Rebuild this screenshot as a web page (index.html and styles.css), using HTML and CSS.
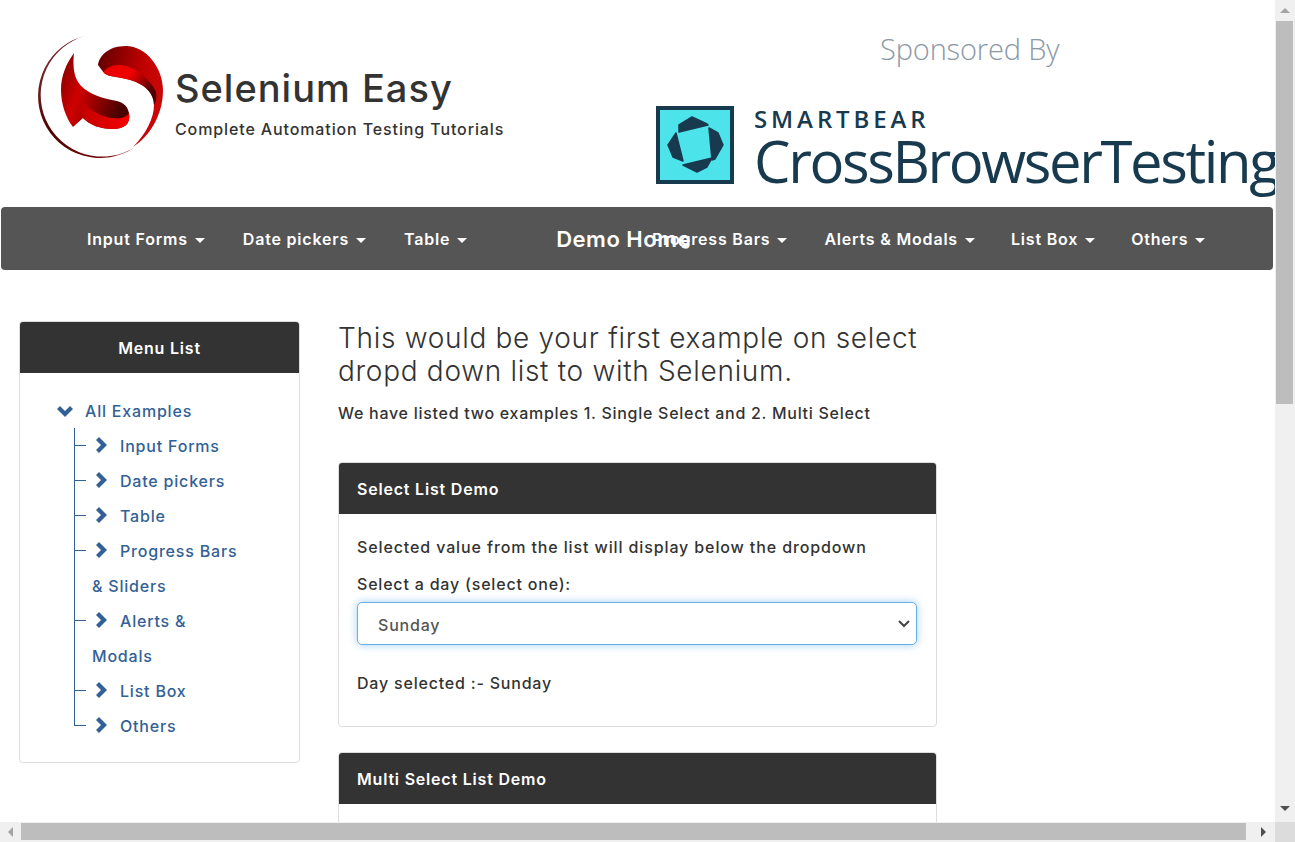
FILE: index.html
```html
<!DOCTYPE html>
<html lang="en">
<head>
  <meta charset="UTF-8">
  <title>Selenium Easy - Dropdown List Demo</title>
  <link rel="stylesheet" href="styles.css">
</head>
<body>

<div class="window">
  <div class="page">

    <header class="top">
      <div class="brand">
        <svg class="logo" viewBox="36 32 130 130" width="130" height="130">
          <defs>
            <linearGradient id="ringGrad" x1="0" y1="0" x2="1" y2="1">
              <stop offset="0" stop-color="#8a3a3a"/>
              <stop offset="0.45" stop-color="#4d0000"/>
              <stop offset="1" stop-color="#8a0c0c"/>
            </linearGradient>
            <linearGradient id="upperGrad" x1="0" y1="0" x2="1" y2="0.3">
              <stop offset="0" stop-color="#5e0000"/>
              <stop offset="0.7" stop-color="#c20000"/>
              <stop offset="1" stop-color="#c80808"/>
            </linearGradient>
            <linearGradient id="upperBand" x1="0" y1="0" x2="1" y2="0.5">
              <stop offset="0" stop-color="#e80000"/>
              <stop offset="0.5" stop-color="#f00000"/>
              <stop offset="1" stop-color="#4a0000"/>
            </linearGradient>
            <linearGradient id="lowerGrad" x1="0" y1="0" x2="1" y2="0.4">
              <stop offset="0" stop-color="#7a0000"/>
              <stop offset="0.4" stop-color="#d00000"/>
              <stop offset="1" stop-color="#4a0000"/>
            </linearGradient>
            <linearGradient id="lowerBand" x1="0" y1="0" x2="1" y2="0">
              <stop offset="0" stop-color="#c00000"/>
              <stop offset="1" stop-color="#f80000"/>
            </linearGradient>
          </defs>
          <path fill="url(#ringGrad)" d="M86 35.6 A62 62 0 1 0 135 147.2 A61.6 61.6 0 1 1 86 35.6 Z"/>
          <path fill="url(#upperGrad)" d="M98 65 C99 57 107 46 126 46 C146 46 163 68 163 90 C163 115 150 136 133 147 C146 134 154 118 154 105 C154 93 145 86 136 82 C128 79 122 78 116 77 C110 76 106 75 104 73 Z"/>
          <path fill="url(#upperBand)" d="M104 71 C109 66 114 65 119 65 C132 65 150 78 156 92 C157 98 156 102 154 105 C154 93 145 86 136 82 C128 79 122 78 116 77 C110 76 106 75 104 73 Z"/>
          <path fill="url(#lowerGrad)" d="M74 53 C66 64 61 76 61 90 C61 104 66 118 73 127 L83 118 C90 125 100 129 113 129 C124 129 131 124 129 113 C127 104 122 102 112 100 C100 98 84 92 78 82 C73 74 73 62 74 53 Z"/>
          <path fill="url(#lowerBand)" d="M83 118 C90 125 100 129 113 129 C124 129 131 124 129 113 C127 117 122 119 112 118 C100 117 88 108 80 100 C79 108 80 114 83 118 Z"/>
        </svg>
        <div class="brand-text">
          <div class="brand-name">Selenium Easy</div>
          <div class="brand-sub">Complete Automation Testing Tutorials</div>
        </div>
      </div>
      <div class="sponsor">
        <div class="sponsor-title">Sponsored By</div>
        <div class="sponsor-logo">
          <svg class="cbt-mark" viewBox="0 0 78 78" width="78" height="78">
            <rect x="2" y="2" width="74" height="74" fill="#4de3ea" stroke="#173a4f" stroke-width="4"/>
            <g fill="#173a4f" stroke="#173a4f" stroke-width="1.5" stroke-linejoin="round">
              <path d="M23 26 L23 19 L36 11 L51 18 L52 19 Z"/>
              <path d="M53 22 L62 27 L67 39 L59 53 L56 54 Z"/>
              <path d="M56 52 L51 61 L41 66 L27 59 Z"/>
              <path d="M20 27 L12 39 L17 51 L27 55 Z"/>
            </g>
          </svg>
          <div class="cbt-text">
            <div class="cbt-small">SMARTBEAR</div>
            <div class="cbt-big">CrossBrowserTesting</div>
          </div>
        </div>
      </div>
    </header>

    <nav class="navbar">
      <a class="nav-item wide">Input Forms<span class="caret"></span></a>
      <a class="nav-item wide">Date pickers<span class="caret"></span></a>
      <a class="nav-item nav-table">Table<span class="caret"></span></a>
      <a class="nav-home">Demo Home</a>
      <a class="nav-item">Progress Bars<span class="caret"></span></a>
      <a class="nav-item tight">Alerts &amp; Modals<span class="caret"></span></a>
      <a class="nav-item tight">List Box<span class="caret"></span></a>
      <a class="nav-item">Others<span class="caret"></span></a>
    </nav>

    <div class="content">
      <aside class="panel side">
        <div class="panel-head center">Menu List</div>
        <div class="side-body">
          <div class="tree-root">
            <svg class="chev-down" viewBox="0 0 16 11" width="16" height="11"><path d="M0 3 L3 0 L8 5 L13 0 L16 3 L8 11 Z"/></svg>
            All Examples
          </div>
          <ul class="tree">
            <li><svg class="chev" viewBox="0 0 11 16" width="11" height="16"><path d="M3 0 L11 8 L3 16 L0 13 L5 8 L0 3 Z"/></svg>Input Forms</li>
            <li><svg class="chev" viewBox="0 0 11 16" width="11" height="16"><path d="M3 0 L11 8 L3 16 L0 13 L5 8 L0 3 Z"/></svg>Date pickers</li>
            <li><svg class="chev" viewBox="0 0 11 16" width="11" height="16"><path d="M3 0 L11 8 L3 16 L0 13 L5 8 L0 3 Z"/></svg>Table</li>
            <li><svg class="chev" viewBox="0 0 11 16" width="11" height="16"><path d="M3 0 L11 8 L3 16 L0 13 L5 8 L0 3 Z"/></svg>Progress Bars<br>&amp; Sliders</li>
            <li><svg class="chev" viewBox="0 0 11 16" width="11" height="16"><path d="M3 0 L11 8 L3 16 L0 13 L5 8 L0 3 Z"/></svg>Alerts &amp;<br>Modals</li>
            <li><svg class="chev" viewBox="0 0 11 16" width="11" height="16"><path d="M3 0 L11 8 L3 16 L0 13 L5 8 L0 3 Z"/></svg>List Box</li>
            <li><svg class="chev" viewBox="0 0 11 16" width="11" height="16"><path d="M3 0 L11 8 L3 16 L0 13 L5 8 L0 3 Z"/></svg>Others</li>
          </ul>
        </div>
      </aside>

      <main class="main">
        <h3 class="intro">This would be your first example on select<br>dropd down list to with Selenium.</h3>
        <p class="lead">We have listed two examples 1. Single Select and 2. Multi Select</p>

        <section class="panel demo">
          <div class="panel-head">Select List Demo</div>
          <div class="panel-body">
            <p class="note">Selected value from the list will display below the dropdown</p>
            <label class="field-label" for="day">Select a day (select one):</label>
            <select id="day" class="day-select">
              <option>Sunday</option>
              <option>Monday</option>
              <option>Tuesday</option>
            </select>
            <p class="result">Day selected :- Sunday</p>
          </div>
        </section>

        <section class="panel demo">
          <div class="panel-head">Multi Select List Demo</div>
          <div class="panel-body tall"></div>
        </section>
      </main>
    </div>
  </div>

  <div class="vbar">
    <span class="arrow up"></span>
    <div class="vthumb"></div>
    <span class="arrow down"></span>
  </div>
  <div class="hbar">
    <span class="arrow left"></span>
    <div class="hthumb"></div>
    <span class="arrow right"></span>
  </div>
  <div class="corner"></div>
</div>

</body>
</html>
```

FILE: styles.css
```css
* {
  box-sizing: border-box;
}

html, body {
  margin: 0;
  height: 100%;
  overflow: hidden;
}

body {
  font-family: 'Inter', 'Noto Sans', sans-serif;
  color: #333;
  background-color: #fff;
  letter-spacing: 0.8px;
}

.window {
  display: grid;
  grid-template-columns: 1275px 20px;
  grid-template-rows: 822px 20px;
  height: 842px;
}

.page {
  overflow: hidden;
}

/* header */
.top {
  display: flex;
  height: 207px;
}

.brand {
  display: flex;
  width: 656px;
  padding: 32px 0 0 36px;
}

.logo {
  flex: none;
}

.brand-text {
  padding: 34px 0 0 9px;
}

.brand-name {
  font-size: 38px;
  line-height: 44px;
  font-weight: 500;
  letter-spacing: 1px;
}

.brand-sub {
  margin-top: 9px;
  font-size: 16px;
  line-height: 20px;
  font-weight: 500;
  letter-spacing: 0.88px;
  white-space: nowrap;
}

.sponsor {
  flex: 1;
  min-width: 0;
  overflow: hidden;
}

.sponsor-title {
  margin: 30px 0 0 224px;
  font-family: 'Open Sans', sans-serif;
  font-weight: 300;
  font-size: 29px;
  line-height: 38px;
  letter-spacing: -0.15px;
  color: #8b98a6;
}

.sponsor-logo {
  display: flex;
  margin-top: 38px;
}

.cbt-mark {
  flex: none;
}

.cbt-text {
  padding-left: 20px;
  color: #173a4f;
  white-space: nowrap;
}

.cbt-small {
  font-family: 'Open Sans', sans-serif;
  font-size: 24px;
  line-height: 26px;
  font-weight: 600;
  letter-spacing: 3.9px;
}

.cbt-big {
  font-family: 'Open Sans', sans-serif;
  font-size: 58px;
  line-height: 58px;
  font-weight: 400;
  letter-spacing: -2.4px;
}

/* navbar */
.navbar {
  display: flex;
  align-items: center;
  height: 63px;
  margin: 0 2px 0 1px;
  padding-left: 86px;
  border-radius: 4px;
  background-color: #555;
  color: #fff;
  font-size: 16px;
  font-weight: 600;
  white-space: nowrap;
}

.nav-item {
  margin-right: 37px;
}

.nav-item.wide {
  margin-right: 38px;
}

.nav-item.tight {
  margin-right: 36px;
}

.nav-table {
  margin-right: 89px;
}

.nav-home {
  margin-right: -39px;
  font-size: 22px;
  letter-spacing: 0.5px;
}

.caret {
  display: inline-block;
  margin-left: 7px;
  vertical-align: middle;
  border-top: 5px solid #fff;
  border-left: 5px solid transparent;
  border-right: 5px solid transparent;
}

/* layout */
.content {
  display: flex;
  align-items: flex-start;
  padding: 51px 0 0 19px;
}

.panel {
  border: 1px solid #ddd;
  border-radius: 4px;
  overflow: hidden;
}

.panel-head {
  height: 51px;
  line-height: 53px;
  padding: 0 18px;
  background-color: #333;
  color: #fff;
  font-size: 16px;
  font-weight: 600;
}

.center {
  text-align: center;
}

/* side menu */
.side {
  flex: none;
  width: 281px;
  height: 442px;
}

.side-body {
  padding: 20px 0 0 37px;
  color: #336196;
  font-size: 16px;
  font-weight: 500;
}

.tree-root {
  display: flex;
  align-items: center;
  height: 36px;
}

.chev-down {
  margin-right: 12px;
  fill: #336196;
}

.tree {
  list-style: none;
  margin: 0 0 0 17px;
  padding: 0;
}

.tree li {
  position: relative;
  padding-left: 18px;
  line-height: 35px;
}

/* tree lines */
.tree li::before {
  content: "";
  position: absolute;
  left: 0;
  top: -1px;
  bottom: 0;
  width: 12px;
  border-left: 1px solid #336196;
}

.tree li::after {
  content: "";
  position: absolute;
  left: 0;
  top: 16px;
  width: 12px;
  border-top: 1px solid #336196;
}

.tree li:last-child::before {
  bottom: 18px;
}

.chev {
  margin: 0 13px 0 4px;
  fill: #336196;
  vertical-align: -1px;
}

/* main column */
.main {
  flex: none;
  width: 599px;
  margin-left: 38px;
  padding-top: 1px;
}

.intro {
  margin: 0;
  font-size: 28px;
  line-height: 33px;
  font-weight: 300;
  letter-spacing: 0.7px;
}

.lead {
  margin: 13px 0 0;
  font-size: 16px;
  line-height: 24px;
  font-weight: 500;
  letter-spacing: 0.72px;
  white-space: nowrap;
}

.demo {
  margin-top: 37px;
}

.demo + .demo {
  margin-top: 25px;
}

.panel-body {
  height: 212px;
  padding: 21px 18px 0;
  font-size: 16px;
  font-weight: 500;
}

.panel-body.tall {
  height: 100px;
}

.note {
  margin: 0;
  line-height: 24px;
  letter-spacing: 0.88px;
}

.field-label {
  display: block;
  margin-top: 13px;
  line-height: 24px;
}

.day-select {
  display: block;
  width: 560px;
  height: 43px;
  margin-top: 6px;
  padding: 2px 20px 0;
  appearance: none;
  border: 1px solid #66afe9;
  border-radius: 5px;
  box-shadow: 0 0 8px rgba(102, 175, 233, 0.6);
  outline: none;
  background: #fff url("data:image/svg+xml,%3Csvg xmlns='http://www.w3.org/2000/svg' width='14' height='10' viewBox='0 0 14 10'%3E%3Cpath d='M2 2 L7 7 L12 2' fill='none' stroke='%23444' stroke-width='2'/%3E%3C/svg%3E") no-repeat right 5px center;
  color: #555;
  font-family: inherit;
  font-size: 16px;
  font-weight: 500;
  letter-spacing: inherit;
}

.result {
  margin: 26px 0 0;
  line-height: 24px;
}

/* scrollbars */
.vbar {
  display: flex;
  flex-direction: column;
  align-items: flex-start;
  background-color: #f0f0f0;
  padding: 21px 0 0 1px;
}

.vthumb {
  width: 17px;
  height: 383px;
  background-color: #bdbdbd;
}

.hbar {
  display: flex;
  align-items: flex-start;
  background-color: #f0f0f0;
  padding: 1px 0 0 21px;
}

.hthumb {
  width: 1225px;
  height: 17px;
  background-color: #bdbdbd;
}

.corner {
  background-color: #dcdcdc;
}

.arrow {
  position: absolute;
  width: 0;
  height: 0;
  border: 5px solid transparent;
}

.arrow.up {
  top: 8px;
  left: 1280px;
  border-top: 0;
  border-bottom-color: #a3a3a3;
}

.arrow.down {
  top: 806px;
  left: 1280px;
  border-bottom: 0;
  border-top-color: #505050;
}

.arrow.left {
  left: 8px;
  top: 827px;
  border-left: 0;
  border-right-color: #a3a3a3;
}

.arrow.right {
  left: 1261px;
  top: 827px;
  border-right: 0;
  border-left-color: #505050;
}
```
